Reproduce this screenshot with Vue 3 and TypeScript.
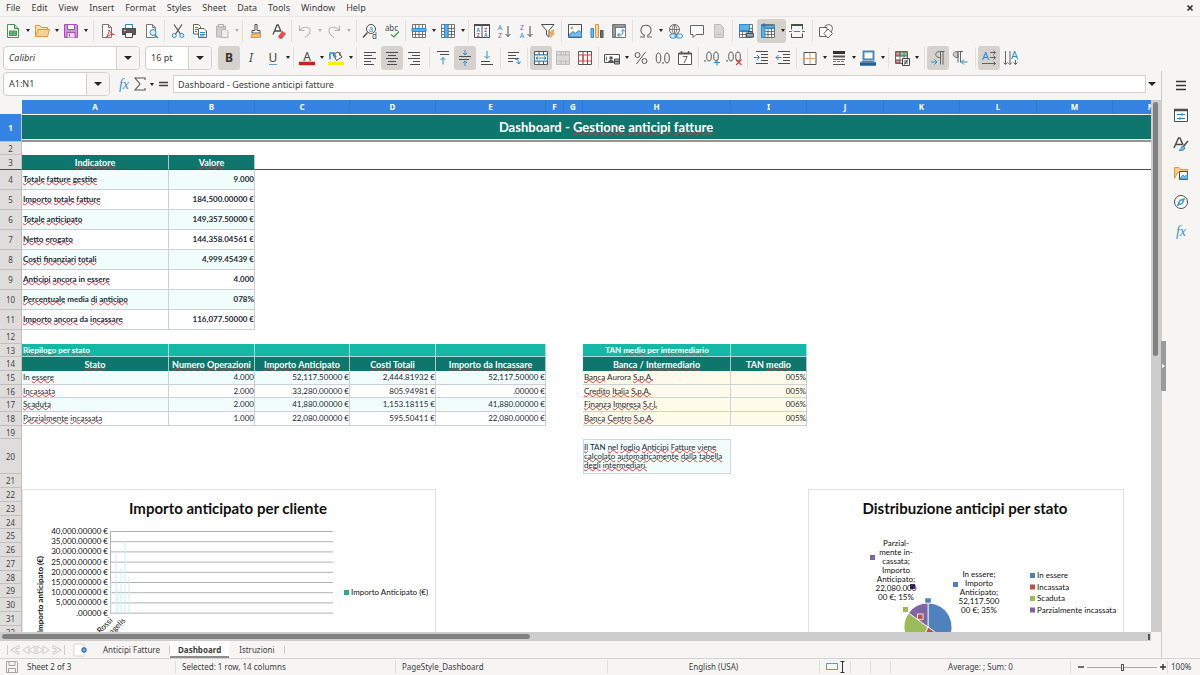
<script setup lang="ts">
import { ref } from 'vue'

interface Tool { id: string; label: string; arrow?: boolean; on?: boolean; off?: boolean }
interface Group { tools: Tool[]; wide?: boolean }
interface Cell { text?: string; kind: string; span?: number }
interface Row { n: number; h: number; cells: Cell[] }

const INK = '#4d4d4d'
const BLUE = '#2a8bd0'
const ORANGE = '#e8983a'
const GREEN = '#3a9b4c'
const RED = '#dc3b3b'
const PURPLE = '#a64fb5'
const p = (d: string, stroke = INK, width = 1, fill = 'none') =>
  `<path d="${d}" fill="${fill}" stroke="${stroke}" stroke-width="${width}"/>`
const t = (x: number, y: number, s: string, fill = INK, size = 8, extra = '') =>
  `<text x="${x}" y="${y}" font-size="${size}" fill="${fill}" text-anchor="middle" font-family="Noto Sans, sans-serif" ${extra}>${s}</text>`
const sheetPage = p('M3.5 1.5h6l3 3v10h-9z M9.5 1.5v3h3', '#777', 1, '#fff')
const grid = p('M1.5 1.5h13v13h-13z M1.5 5.5h13 M1.5 8.5h13 M1.5 11.5h13 M4.5 1.5v13 M8 1.5v13 M11.5 1.5v13', '#666', 0.9, '#fff')
const lines = (rows: [number, number, number][]) => p(rows.map(([x1, x2, y]) => `M${x1} ${y}.5H${x2}`).join(' '))

const icons: Record<string, string> = {
  new: p('M2.5 1.5h7l4 4v9h-11z', GREEN, 1, '#fff') + p('M9.5 1.5v4h4', GREEN, 1, '#a8d8ae') + p('M4.5 8h7v4.500h-7z M4.5 10.2h7 M8 8v4.500', GREEN, 1, '#7fc48b'),
  open: p('M1.500 13.500v-11h4.500l1.500 2h6v3', ORANGE, 1, '#fde2b4') + p('M1.500 13.500l2.500-7h11.500l-2 7z', ORANGE, 1, '#fbcf8d'),
  save: p('M1.500 1.500h12l1 1v12h-13z', PURPLE, 1, '#cf94d8') + p('M4.500 1.500h7v5h-7z', PURPLE, 1, '#fff') + p('M4 14.500v-5h8v5', PURPLE, 1, '#f1dff4') + p('M6.500 10.500v3', PURPLE),
  pdf: sheetPage + p('M7 15c2-3 3.500-6 3-8c3 5 5 5 5.500 4.500c-3-1-6 1-8.500 3.500', RED),
  print: p('M4.500 5.500v-4h7v4', BLUE, 1, '#fff') + p('M1.500 5.500h13v6h-13z', INK, 1, '#5b5b5b') + p('M4.500 9.500h7v5h-7z', INK, 1, '#fff') + p('M3 7.500h1.500', '#fff'),
  preview: sheetPage + `<circle cx="10" cy="9.500" r="3" fill="#d8ecfa" stroke="${BLUE}"/>` + p('M12 12l3 3', BLUE, 1.5),
  cut: p('M4 1.500l6.500 9.500 M12 1.500l-6.500 9.500', INK, 1.2) + `<circle cx="4.200" cy="12.500" r="2" fill="none" stroke="${BLUE}"/><circle cx="11.800" cy="12.500" r="2" fill="none" stroke="${BLUE}"/>`,
  copy: p('M1.500 1.500h5l2 2v7.500h-7z', '#666', 1, '#fff') + p('M6.500 5.500h5.500l2.500 2.500v6.500h-8z', '#666', 1, '#fff') + p('M3 4.500h3 M3 6.500h3 M3 8.500h2 M8 9.500h5 M8 11.500h5 M8 13h4', BLUE),
  paste: p('M2.500 3h9v11h-9z', '#b6b4b2', 1, '#d2d0ce') + p('M4.500 1.500h5v2.500h-5z', '#aaa', 1, '#eee') + p('M7.500 6.500h4.500l2 2v6h-6.500z', '#b6b4b2', 1, '#ededed'),
  clone: p('M7 1.500h2v6h3v2.500h-8v-2.500h3z', INK, 1, '#fff') + p('M4 10.500h8.500v4h-9.500z', ORANGE, 1, '#f5b04f') + p('M5.500 14v-2 M8 14v-2 M10.500 14v-2', '#fff', 0.7),
  clear: p('M3 11.500l4-9.500h1.200l3 7 M4.500 8h5.500', INK, 1.3) + p('M8.500 13.500l4-5 3 2.300-3.700 4.500h-2z', RED, 0.8, '#ee4b4b'),
  undo: p('M2.500 2.500v5h5 M2.500 7.500c4-5 11-4 10.500 1c0 3-3 4-5 6', '#b9b7b5', 1.1),
  redo: p('M13.500 2.500v5h-5 M13.500 7.500c-4-5-11-4-10.500 1c0 3 3 4 5 6', '#b9b7b5', 1.1),
  find: `<circle cx="9" cy="6" r="4.500" fill="#fff" stroke="${INK}"/>` + p('M5.500 9.500l-4.500 5', INK, 1.4) + t(9, 8.5, 'a', BLUE, 8) + t(12.5, 15.5, 'd', INK, 8),
  spell: t(7.5, 7.5, 'abc', INK, 8) + p('M7 11.500l3 2.500 5-5.500', GREEN, 1.2),
  row: grid + p('M1 5.500h14v3h-14z', BLUE, 1, '#5eb0e8'),
  col: grid + p('M4.500 1.500h3.500v13h-3.500z', BLUE, 1, '#5eb0e8'),
  sort: p('M0.500 1.500h15v13h-15z M8 1.500v13', INK, 1, '#fff') + p('M0 2h16', INK, 2) + t(4.3, 8.5, 'A', BLUE, 5, 'font-weight="bold"') + t(4.3, 14, 'Z', PURPLE, 5, 'font-weight="bold"') + t(11.7, 8.5, 'Z', PURPLE, 5, 'font-weight="bold"') + t(11.7, 14, 'A', BLUE, 5, 'font-weight="bold"'),
  asc: t(4, 7, 'A', BLUE, 7) + t(4, 15, 'Z', PURPLE, 7) + p('M12 3v10.500 M9.500 11l2.500 2.500 2.500-2.500'),
  desc: t(4, 7, 'Z', PURPLE, 7) + t(4, 15, 'A', BLUE, 7) + p('M12 3v10.500 M9.500 11l2.500 2.500 2.500-2.500'),
  filter: p('M1.500 1.500h12.500l-5 6v6.500l-2.500-2v-4.500z', INK, 1, '#fff') + p('M12.500 7l-3 4h2l-1 3.500 4-4.500h-2l1.500-3z', ORANGE, 0.8, '#f5b04f'),
  image: p('M1.500 1.500h13v13h-13z', INK, 1, '#fff') + p('M2 12l4-3.500 2.500 2 3.500-3 2.500 2.500v4h-12.500z', BLUE, 1, '#78bced') + `<circle cx="5" cy="5" r="1.300" fill="${ORANGE}"/>`,
  chart: p('M2 5.500h2.500v9h-2.500z', BLUE, 1, '#75bbec') + p('M6.500 1.500h3v13h-3z', ORANGE, 1, '#fbd299') + p('M11.500 7.500h2.500v7h-2.500z', INK, 1, '#777'),
  pivot: p('M1.500 1.500h13v13h-13z M1.500 4.500h13 M4.500 1.500v13', '#777', 1, '#fff') + p('M2 2h12v2h-12z M2 2h2v12h-2z', '#777', 0.6, '#aaa') + p('M6.500 12h3c2 0 2.500-1.500 2.500-5.500 M10 8.500l2-2 2 2 M8.500 10l-2 2 2 2', BLUE),
  omega: p('M2 14h4.200v-1.800c-5-3-4-10 1.800-10s6.800 7 1.800 10v1.800h4.200', '#666', 1.1),
  link: `<circle cx="7.500" cy="6.500" r="5" fill="none" stroke="#666"/>` + p('M2.500 6.500h10 M7.500 1.500v10 M7.500 1.500c-3 3-3 7 0 10 M7.500 1.500c3 3 3 7 0 10', '#666', 0.8) + `<rect x="3" y="11" width="6.500" height="4" rx="2" fill="#f6f5f4" stroke="${BLUE}"/><rect x="9" y="11" width="6.500" height="4" rx="2" fill="#f6f5f4" stroke="${BLUE}"/>` + p('M7 13h4.500', BLUE),
  comment: p('M1.500 2.500h13v9h-7.500l-3 3v-3h-2.500z', '#666', 1, '#fff'),
  header: p('M3.500 1.500h6l3 3v10h-9z', '#bbb', 1, '#d8d6d4') + p('M5 11.500h6', '#bbb'),
  area: grid + p('M1.500 1.500h10v6h-10z', BLUE, 1, '#5eb0e8') + p('M8.500 10.500h7v3.500h-7z M10 8.500h4v2h-4z', INK, 1, '#8aa8bd'),
  freeze: grid + p('M1.500 2.500h13v2.500h-9.500v9.500h-3.500z', BLUE, 1, '#5eb0e8') + p('M4 0v5 M1.500 2.500h5', '#1c6fb0', 0.9),
  split: p('M2.500 2.500v4 M13.500 2.500v4 M2.500 10.500v4h11v-4', INK, 1) + p('M2 2h12', INK, 2) + p('M0 8.500h3 M5 8.500h6 M13 8.500h3', BLUE, 1),
  draw: `<circle cx="10.500" cy="5.500" r="4" fill="#fff" stroke="#666"/>` + p('M1.500 4.500h7.500v9h-7.500z', '#666', 1, '#fff') + p('M10 6l4.500 4.500-4.500 4.500-4-4.500z', '#666', 1, '#fff'),
  bold: t(8, 12, 'B', '#333', 12, 'font-weight="bold"'),
  italic: t(8, 12, 'I', '#444', 12, 'font-style="italic"'),
  underline: t(8, 11.5, 'U', '#444', 12) + p('M4 14.500h8', '#5aa3dd', 1),
  fontcolor: t(8, 10.5, 'A', '#444', 12) + p('M0 13.500h16', '#c9211e', 3.5),
  highlight: p('M5 4.500l5-2.500 4 5-5.500 3.500z', INK, 1, '#fff') + p('M2 9.500v-6.500l4 0 2 4.500', BLUE, 1.5) + p('M12 2v4', INK) + p('M0 13.500h16', '#fbf000', 3.5),
  left: lines([[2, 14, 2], [2, 10, 5], [2, 14, 8], [2, 9, 11], [2, 12, 14]]),
  center: lines([[2, 14, 2], [4, 12, 5], [2, 14, 8], [4, 12, 11], [3, 13, 14]]),
  right: lines([[2, 14, 2], [6, 14, 5], [2, 14, 8], [7, 14, 11], [4, 14, 14]]),
  top: lines([[2, 14, 1], [5, 14, 4]]) + p('M8 14.500v-7 M5.500 10l2.500-2.500 2.500 2.500', BLUE),
  middle: lines([[2, 14, 6], [2, 12, 9]]) + p('M8 0v5 M6 3l2 2 2-2 M8 16v-5 M6 13l2-2 2 2', BLUE),
  bottom: lines([[2, 11, 11], [2, 14, 14]]) + p('M8 1v7 M5.500 6l2.500 2.500 2.500-2.500', BLUE),
  wrap: lines([[2, 13, 2], [2, 10, 5], [2, 13, 8], [2, 7, 11]]) + p('M9 9c3 0 4 2 4 4.500 M10.500 12l2.500 2 1.500-2.500', BLUE),
  merge: p('M1.500 1.500h13v13h-13z M1.500 5h13 M1.500 11h13 M6 1.500v3.500 M10.500 1.500v3.500 M6 11v3.500 M10.500 11v3.500', '#555', 1, '#fff') + p('M1.500 5h13v6h-13z', BLUE, 1, '#fff') + p('M3 8h10 M5 6.500l-2 1.500 2 1.500 M11 6.500l2 1.500-2 1.500', BLUE),
  mergecells: p('M1.500 1.500h13v13h-13z M1.500 5h13 M1.500 11h13 M6 1.500v3.500 M10.500 1.500v3.500 M6 11v3.500 M10.500 11v3.500', '#bbb', 1, '#dddbd9'),
  unmerge: p('M1.500 1.500h13v13h-13z M6 1.500v13 M10.500 1.500v13', '#555', 1, '#fff') + p('M1.500 5h13v6h-13z M6 5v6 M10.500 5v6', RED),
  currency: p('M0.500 4.500h15v8h-15z', '#555', 1, '#fff') + p('M2.500 6.500v4', '#555', 0.8) + `<circle cx="7" cy="8" r="1.800" fill="#555"/>` + p('M4.500 12.500c0-3 5-3 5 0', '#555', 1, '#555') + p('M10.500 9h5v5h-5z M10.500 11.500h5', '#444', 0.9, '#aaa'),
  percent: `<circle cx="4.500" cy="5" r="2.500" fill="none" stroke="#555"/><circle cx="11.500" cy="11" r="2.500" fill="none" stroke="#555"/>` + p('M12.500 2l-9 12', '#555'),
  number: `<ellipse cx="3.500" cy="8" rx="2.300" ry="5" fill="none" stroke="#555"/><ellipse cx="12" cy="8" rx="2.300" ry="5" fill="none" stroke="#555"/>` + p('M8 12v1.800', '#555', 1.2),
  date: p('M1.500 3.500h13v11h-13z', '#555', 1, '#fff') + p('M1.500 3.500h13', '#555', 2) + p('M4.500 1v3 M11.500 1v3', '#555', 1.4) + t(8, 13, '7', '#444', 9),
  adddec: `<ellipse cx="5" cy="6.500" rx="2.300" ry="4.500" fill="none" stroke="#555"/><ellipse cx="12" cy="6.500" rx="2.300" ry="4.500" fill="none" stroke="#555"/>` + p('M1 10v1.800', '#555', 1.2) + p('M10 12.500h6 M13 9.500v6', BLUE, 1.1),
  deldec: `<ellipse cx="5" cy="6.500" rx="2.300" ry="4.500" fill="none" stroke="#555"/><ellipse cx="12" cy="6.500" rx="2.300" ry="4.500" fill="none" stroke="#555"/>` + p('M1 10v1.800', '#555', 1.2) + p('M10 9.500l5.500 5.500 M15.500 9.500l-5.500 5.500', RED, 1.1),
  indent: lines([[3, 15, 1], [8, 15, 4], [8, 15, 7], [8, 15, 10], [3, 15, 13]]) + p('M1 7.500h5 M4 5l2.500 2.500-2.500 2.500', BLUE),
  outdent: lines([[3, 15, 1], [8, 15, 4], [8, 15, 7], [8, 15, 10], [3, 15, 13]]) + p('M1 7.500h5.500 M3.500 5l-2.500 2.500 2.500 2.500', BLUE),
  borders: p('M2 2.500h12v12h-12z', '#555', 1, '#fff') + p('M8 3v11 M2.500 8.500h11', '#d9a15d', 1),
  style: p('M2 2.500h12', '#333', 3) + p('M2 6.500h12', '#555', 2) + p('M2 9.500h12', '#666', 1, 'none') + p('M2 11.500h3 M6 11.500h3 M10 11.500h3', '#777') + p('M2 14.500h12', '#555'),
  bordercolor: p('M3.500 1.500h10v8h-10z', '#4d88b8', 2, '#fff') + p('M1.500 11.500h13', BLUE, 1) + p('M0 14h16', '#1f619e', 3.5),
  cond: p('M1.500 1.500h12v12h-12z', '#666', 1, '#fff') + p('M2 2h4v4h-4z M2 10h4v3h-4z', '#555', 0.6, '#f08a80') + p('M6 2h7v4h-7z', '#555', 0.6, '#8ccf92') + p('M1.500 6h12 M1.500 10h12 M6 1.500v12 M10 1.500v12', '#666', 0.8) + p('M8.500 8.500h7v7h-7z', '#444', 1, '#fff') + p('M10 11h4 M10 13h4 M13.500 9.500l-3 5', '#444', 0.9),
  ltr: p('M14.500 1.500h-5c-5 0-5 6 0 6h1 M10.500 1.500v13 M13 1.500v13', '#666', 1) + p('M1 12h6 M4.500 9.500l2.500 2.500-2.500 2.500', BLUE),
  rtl: p('M8.500 1.500h-3.500c-5 0-5 6 0 6h1v-6', '#777', 1, '#c9c7c5') + p('M6 1.500v11 M8.500 1.500v11 M8 1.500h3', '#666') + p('M15.500 12h-6 M12 9.500l-2.500 2.500 2.500 2.500', BLUE),
  horiz: t(4.5, 10, 'A', BLUE, 11) + p('M9 2.500h5.500 M12.500 0.500l2 2-2 2 M9 7.500h5.500 M12.500 5.500l2 2-2 2 M1 13.500h13.500 M12.500 11.500l2 2-2 2', '#555', 0.9),
  vert: t(11.5, 9, 'A', BLUE, 11) + p('M2.500 1v13.500 M0.500 12.500l2 2 2-2 M7 1v13.500 M5 12.500l2 2 2-2 M12.500 10v4.500 M10.500 12.500l2 2 2-2', '#555', 0.9),
  fx: '<text x="8" y="12.500" font-size="14" fill="#3b8fd9" text-anchor="middle" font-style="italic" font-family="Liberation Serif, serif">fx</text>',
  sum: p('M13 4v-2h-10l5 6-5 6h10v-2', '#555', 1.1),
  equals: p('M4 6.500h9 M4 9.500h9', '#444', 1.3),
  burger: p('M3 3.500h10 M3 7.500h10 M3 11.500h10', '#333', 1.3),
  properties: p('M1.500 2.500h13v12h-13z', INK, 1, '#fff') + p('M1 3h14', INK, 2.5) + p('M4 7.500h8 M9 6v3 M4 11.500h8 M7 10v3', BLUE),
  styles: p('M1 12l4.500-10h1.500l3 7 M3 8.500h6', INK, 1.5) + p('M15 5l-5 6', INK, 1.5) + p('M9.500 10l2.500 2c-1 3-4 2.500-6 2.500c2-1 2-3 3.500-4.500', BLUE, 1, '#78bced'),
  gallery: p('M1.500 13.500v-11h4.500l1.500 2h7v3h-10z', ORANGE, 1, '#fbcf8d') + p('M6.500 6.500h8v8h-8z', INK, 1, '#fff') + p('M7 13l3-3 1.500 1.500 3-2v4.500h-7.500z', BLUE, 0.8, '#78bced'),
  navigator: `<circle cx="8" cy="8" r="6.500" fill="#fff" stroke="${INK}"/>` + p('M11.500 4.500l-2 5-5 2 2-5z', BLUE, 1, '#78bced') + `<circle cx="8" cy="8" r="1" fill="#fff"/>`,
}

const toolbarOne: Group[] = [
  { tools: [{ id: 'new', label: 'New', arrow: true }, { id: 'open', label: 'Open', arrow: true }, { id: 'save', label: 'Save', arrow: true }], wide: true },
  { tools: [{ id: 'pdf', label: 'Export as PDF' }, { id: 'print', label: 'Print' }, { id: 'preview', label: 'Print preview' }] },
  { tools: [{ id: 'cut', label: 'Cut' }, { id: 'copy', label: 'Copy' }, { id: 'paste', label: 'Paste', arrow: true, off: true }] },
  { tools: [{ id: 'clone', label: 'Clone formatting' }, { id: 'clear', label: 'Clear formatting' }] },
  { tools: [{ id: 'undo', label: 'Undo', arrow: true, off: true }, { id: 'redo', label: 'Redo', arrow: true, off: true }], wide: true },
  { tools: [{ id: 'find', label: 'Find and replace' }, { id: 'spell', label: 'Spelling' }] },
  { tools: [{ id: 'row', label: 'Row', arrow: true }, { id: 'col', label: 'Column', arrow: true }] },
  { tools: [{ id: 'sort', label: 'Sort' }, { id: 'asc', label: 'Sort ascending' }, { id: 'desc', label: 'Sort descending' }, { id: 'filter', label: 'AutoFilter' }] },
  { tools: [{ id: 'image', label: 'Insert image' }, { id: 'chart', label: 'Insert chart' }, { id: 'pivot', label: 'Pivot table' }] },
  { tools: [{ id: 'omega', label: 'Special character', arrow: true }, { id: 'link', label: 'Hyperlink' }, { id: 'comment', label: 'Comment' }, { id: 'header', label: 'Headers and footers', off: true }] },
  { tools: [{ id: 'area', label: 'Print area' }, { id: 'freeze', label: 'Freeze rows and columns', arrow: true, on: true }, { id: 'split', label: 'Split window' }], wide: true },
  { tools: [{ id: 'draw', label: 'Draw functions' }] },
]
const toolbarTwo: Group[] = [
  { tools: [{ id: 'bold', label: 'Bold', on: true }, { id: 'italic', label: 'Italic' }, { id: 'underline', label: 'Underline', arrow: true }] },
  { tools: [{ id: 'fontcolor', label: 'Font color', arrow: true }, { id: 'highlight', label: 'Background color', arrow: true }] },
  { tools: [{ id: 'left', label: 'Align left' }, { id: 'center', label: 'Align center', on: true }, { id: 'right', label: 'Align right' }], wide: true },
  { tools: [{ id: 'top', label: 'Align top' }, { id: 'middle', label: 'Center vertically', on: true }, { id: 'bottom', label: 'Align bottom' }] },
  { tools: [{ id: 'wrap', label: 'Wrap text' }] },
  { tools: [{ id: 'merge', label: 'Merge and center', on: true }, { id: 'mergecells', label: 'Merge cells', off: true }, { id: 'unmerge', label: 'Unmerge cells' }] },
  { tools: [{ id: 'currency', label: 'Currency', arrow: true }, { id: 'percent', label: 'Percent' }, { id: 'number', label: 'Number' }, { id: 'date', label: 'Date' }] },
  { tools: [{ id: 'adddec', label: 'Add decimal place' }, { id: 'deldec', label: 'Delete decimal place' }] },
  { tools: [{ id: 'indent', label: 'Increase indent' }, { id: 'outdent', label: 'Decrease indent' }] },
  { tools: [{ id: 'borders', label: 'Borders', arrow: true }, { id: 'style', label: 'Border style', arrow: true }, { id: 'bordercolor', label: 'Border color', arrow: true }] },
  { tools: [{ id: 'cond', label: 'Conditional formatting', arrow: true }], wide: true },
  { tools: [{ id: 'ltr', label: 'Left to right', on: true }, { id: 'rtl', label: 'Right to left' }], wide: true },
  { tools: [{ id: 'horiz', label: 'Horizontal text', on: true }, { id: 'vert', label: 'Vertical text' }] },
]
const sidebar: Tool[] = [
  { id: 'burger', label: 'Sidebar settings' }, { id: 'properties', label: 'Properties' }, { id: 'styles', label: 'Styles' },
  { id: 'gallery', label: 'Gallery' }, { id: 'navigator', label: 'Navigator' }, { id: 'fx', label: 'Functions' },
]
const menus = ['File', 'Edit', 'View', 'Insert', 'Format', 'Styles', 'Sheet', 'Data', 'Tools', 'Window', 'Help']

const columns = [['A', 147], ['B', 86], ['C', 95], ['D', 86], ['E', 110], ['F', 18], ['G', 19], ['H', 148], ['I', 76], ['J', 77], ['K', 76], ['L', 77], ['M', 76], ['N', 77]] as [string, number][]

// Square brackets mark the words flagged by the spell checker.
const parts = (s: string) => s.split(/(\[[^\]]*\])/).filter(Boolean).map(x =>
  x.startsWith('[') ? { text: x.slice(1, -1), bad: true } : { text: x, bad: false })

const gap = (span: number): Cell => ({ kind: 'none', span })
const kpi = (n: number, label: string, value: string): Row => {
  const tint = n % 2 === 0 ? ' mint' : ''
  return { n, h: 20, cells: [{ text: label, kind: 'data strong' + tint }, { text: value, kind: 'data strong num' + tint }, gap(12)] }
}
const state = (n: number, h: number, v: string[], bank: string, rate: string): Row => {
  const tint = n % 2 === 1 ? ' mint' : ''
  return {
    n, h, cells: [
      ...v.map((text, i) => ({ text, kind: 'data' + (i ? ' num' : '') + tint })),
      gap(2), { text: bank, kind: 'data cream' }, { text: rate, kind: 'data cream num' }, gap(5),
    ],
  }
}
const blank = (n: number, h: number): Row => ({ n, h, cells: [gap(14)] })

const rows: Row[] = [
  { n: 1, h: 28, cells: [{ text: 'Dashboard - [Gestione] [anticipi] [fatture]', kind: 'title', span: 14 }] },
  blank(2, 13),
  { n: 3, h: 15, cells: [{ text: '[Indicatore]', kind: 'head' }, { text: '[Valore]', kind: 'head' }, gap(12)] },
  kpi(4, '[Totale] [fatture] [gestite]', '9.000'),
  kpi(5, '[Importo] [totale] [fatture]', '184,500.00000 €'),
  kpi(6, '[Totale] [anticipato]', '149,357.50000 €'),
  kpi(7, '[Netto] [erogato]', '144,358.04561 €'),
  kpi(8, '[Costi] [finanziari] [totali]', '4,999.45439 €'),
  kpi(9, '[Anticipi] [ancora] in [essere]', '4.000'),
  kpi(10, '[Percentuale] media [di] [anticipo]', '078%'),
  kpi(11, '[Importo] [ancora] da [incassare]', '116,077.50000 €'),
  blank(12, 14),
  { n: 13, h: 13, cells: [{ text: '[Riepilogo] per [stato]', kind: 'band' }, { kind: 'band' }, { kind: 'band' }, { kind: 'band' }, { kind: 'band' }, gap(2), { text: 'TAN [medio] per [intermediario]', kind: 'band mid' }, { kind: 'band' }, gap(5)] },
  { n: 14, h: 14, cells: [{ text: '[Stato]', kind: 'head' }, { text: '[Numero] [Operazioni]', kind: 'head' }, { text: '[Importo] [Anticipato]', kind: 'head' }, { text: '[Costi] [Totali]', kind: 'head' }, { text: '[Importo] [da] [Incassare]', kind: 'head' }, gap(2), { text: '[Banca] / [Intermediario]', kind: 'head' }, { text: 'TAN [medio]', kind: 'head' }, gap(5)] },
  state(15, 14, ['In [essere]', '4.000', '52,117.50000 €', '2,444.81932 €', '52,117.50000 €'], '[Banca] Aurora [S.p.A.]', '005%'),
  state(16, 13, ['[Incassata]', '2.000', '33,280.00000 €', '805.94981 €', '.00000 €'], '[Credito] [Italia] [S.p.A.]', '005%'),
  state(17, 14, ['[Scaduta]', '2.000', '41,880.00000 €', '1,153.18115 €', '41,880.00000 €'], '[Finanza] [Impresa] [S.r.l.]', '006%'),
  state(18, 14, ['[Parzialmente] [incassata]', '1.000', '22,080.00000 €', '595.50411 €', '22,080.00000 €'], '[Banca] [Centro] [S.p.A.]', '005%'),
  blank(19, 13),
  { n: 20, h: 35, cells: [gap(7), { text: '[Il] TAN [nel] [foglio] [Anticipi] [Fatture] [viene] [calcolato] [automaticamente] [dalla] [tabella] [degli] [intermediari.]', kind: 'note' }, gap(6)] },
  ...[14, 14, 14, 13, 14, 14, 14, 13, 14, 14, 14, 14].map((h, i) => blank(21 + i, h)),
]

const yTicks = ['40,000.00000 €', '35,000.00000 €', '30,000.00000 €', '25,000.00000 €', '20,000.00000 €', '15,000.00000 €', '10,000.00000 €', '5,000.00000 €', '.00000 €']
const bars = [[89, 92], [94, 65], [96, 101], [99, 80], [103, 52], [107, 88]]

const slice = (from: number, to: number) => {
  const pt = (f: number) => `${120 + 24 * Math.sin(f * 2 * Math.PI)} ${138 - 24 * Math.cos(f * 2 * Math.PI)}`
  return `M120 138L${pt(from)}A24 24 0 0 1 ${pt(to)}Z`
}
const slices = [
  { name: 'In essere', color: '#4f81bd', d: slice(0, 0.35) },
  { name: 'Incassata', color: '#c0504d', d: slice(0.35, 0.57) },
  { name: 'Scaduta', color: '#9bbb59', d: slice(0.57, 0.85) },
  { name: 'Parzialmente incassata', color: '#8064a2', d: slice(0.85, 1) },
]
const callouts = [
  { x: 88, y: 57, lines: ['Parzial-', 'mente in-', 'cassata;', 'Importo', 'Anticipato;', '22,080.000', '00 €; 15%'] },
  { x: 171, y: 88, lines: ['In essere;', 'Importo', 'Anticipato;', '52,117.500', '00 €; 35%'] },
]

const formula = ref('Dashboard - Gestione anticipi fatture')
const nameBox = ref('A1:N1')
const zoom = ref(50)
const tabs = ['Anticipi Fatture', 'Dashboard', 'Istruzioni']
const activeTab = ref('Dashboard')
</script>

<template>
  <div class="app">
    <nav class="menubar" aria-label="Menu">
      <button v-for="m in menus" :key="m" type="button">{{ m }}</button>
      <button type="button" class="close" aria-label="Close document">
        <svg width="8" height="8" viewBox="0 0 8 8"><path d="M1.500 1.500l5 5M6.500 1.500l-5 5" stroke="#333" stroke-width="1.700" /></svg>
      </button>
    </nav>

    <div class="toolbar" role="toolbar" aria-label="Standard">
      <div v-for="(g, i) in toolbarOne" :key="i" class="group" :class="{ wide: g.wide }">
        <span v-for="b in g.tools" :key="b.id" class="tool" :class="{ on: b.on, off: b.off }">
          <button type="button" class="icon" :aria-label="b.label"><svg viewBox="0 0 16 16" v-html="icons[b.id]"></svg></button>
          <button v-if="b.arrow" type="button" class="drop" :aria-label="b.label + ' options'"></button>
        </span>
      </div>
    </div>

    <div class="toolbar" role="toolbar" aria-label="Formatting">
      <label class="combo font"><select aria-label="Font name"><option>Calibri</option></select><span class="caret"></span></label>
      <label class="combo size"><select aria-label="Font size"><option>16 pt</option></select><span class="caret"></span></label>
      <div v-for="(g, i) in toolbarTwo" :key="i" class="group" :class="{ wide: g.wide }">
        <span v-for="b in g.tools" :key="b.id" class="tool" :class="{ on: b.on, off: b.off }">
          <button type="button" class="icon" :aria-label="b.label"><svg viewBox="0 0 16 16" v-html="icons[b.id]"></svg></button>
          <button v-if="b.arrow" type="button" class="drop" :aria-label="b.label + ' options'"></button>
        </span>
      </div>
    </div>

    <main class="main">
      <div class="work">
        <div class="formulabar">
          <div class="combo name"><input v-model="nameBox" aria-label="Name box"><button type="button" class="caret" aria-label="Named ranges"></button></div>
          <button type="button" class="small" aria-label="Function wizard"><svg viewBox="0 0 16 16" v-html="icons.fx"></svg></button>
          <button type="button" class="small" aria-label="Select function"><svg viewBox="0 0 16 16" v-html="icons.sum"></svg></button>
          <button type="button" class="drop" aria-label="Select function options"></button>
          <button type="button" class="small" aria-label="Formula"><svg viewBox="0 0 16 16" v-html="icons.equals"></svg></button>
          <input v-model="formula" class="formula" aria-label="Input line">
          <button type="button" class="drop big" aria-label="Expand formula bar"></button>
        </div>

        <div class="viewport">
          <div class="sheet">
            <table>
              <colgroup><col class="rowcol"><col v-for="c in columns" :key="c[0]" :style="{ width: c[1] + 'px' }"></colgroup>
              <thead>
                <tr><th class="corner"></th><th v-for="c in columns" :key="c[0]" scope="col" class="colhead">{{ c[0] }}</th></tr>
              </thead>
              <tbody>
                <tr v-for="r in rows" :key="r.n" :class="{ frozen: r.n === 3, selected: r.n === 1 }" :style="{ height: r.h + 'px' }">
                  <th scope="row" class="rowhead">{{ r.n }}</th>
                  <td v-for="(c, i) in r.cells" :key="i" :colspan="c.span || 1" :class="c.kind">
                    <template v-if="c.text"><span v-for="(w, k) in parts(c.text)" :key="k" :class="{ bad: w.bad }">{{ w.text }}</span></template>
                  </td>
                </tr>
              </tbody>
            </table>

            <svg class="chart bars" width="414" height="200" viewBox="0 0 414 200" role="img" aria-label="Importo anticipato per cliente">
              <rect x="0.500" y="0.500" width="413" height="220" fill="#fff" stroke="#e2e2e2" />
              <text class="ctitle" x="206" y="25">Importo anticipato per cliente</text>
              <g v-for="(y, i) in yTicks" :key="y">
                <line x1="88" x2="311" :y1="42.500 + i * 10.2" :y2="42.500 + i * 10.2" stroke="#b3b3b3" />
                <text class="tick" x="86" :y="45 + i * 10.2">{{ y }}</text>
              </g>
              <line x1="88.500" x2="88.500" y1="42" y2="124" stroke="#b3b3b3" />
              <line v-for="b in bars" :key="b[0]" :x1="b[0]" :x2="b[0]" :y1="b[1]" y2="124" stroke="#cdf2ec" />
              <text class="axis" transform="translate(21 67) rotate(-90)">Importo anticipato (€)</text>
              <text class="tick" transform="translate(91 132) rotate(-45)">Rossi</text>
              <text class="tick" transform="translate(104 132) rotate(-45)">De Angelis</text>
              <rect x="322" y="101" width="5" height="5" fill="#2aa99b" />
              <text class="label" x="329" y="106">Importo Anticipato (€)</text>
            </svg>

            <svg class="chart pie" width="317" height="200" viewBox="0 0 317 200" role="img" aria-label="Distribuzione anticipi per stato">
              <rect x="0.500" y="0.500" width="315" height="220" fill="#fff" stroke="#e2e2e2" />
              <text class="ctitle" x="157" y="25">Distribuzione anticipi per stato</text>
              <path v-for="s in slices" :key="s.name" :d="s.d" :fill="s.color" stroke="#fff" stroke-width="0.800" />
              <rect x="62" y="66" width="5" height="5" fill="#8064a2" />
              <rect x="145" y="93" width="5" height="5" fill="#4f81bd" />
              <rect x="102" y="95" width="5" height="5" fill="#3f2f73" />
              <rect x="95" y="118" width="5" height="5" fill="#9bbb59" />
              <rect x="117" y="109" width="6" height="5" fill="#4f81bd" stroke="#fff" stroke-width="0.500" />
              <rect x="109.500" y="125" width="5.500" height="5.500" fill="#c0504d" stroke="#fff" stroke-width="0.800" />
              <text v-for="c in callouts" :key="c.x" class="call" :x="c.x" :y="c.y"><tspan v-for="(l, i) in c.lines" :key="l" :x="c.x" :y="c.y + i * 9">{{ l }}</tspan></text>
              <g v-for="(s, i) in slices" :key="s.name">
                <rect x="222" :y="84 + i * 11.500" width="5" height="5" :fill="s.color" />
                <text class="label" x="229" :y="89 + i * 11.500">{{ s.name }}</text>
              </g>
            </svg>
          </div>
          <div class="vscroll"><div class="vthumb"></div></div>
        </div>
        <div class="hscroll"><div class="htrack"><div class="hthumb"></div><div class="hend"></div></div></div>

        <div class="tabbar">
          <div class="nav">
            <button type="button" aria-label="First sheet"><svg viewBox="0 0 15 12"><path d="M1.500 1v10M13 1.500L4.500 6l8.500 4.500v-3h-3v-3h3z" /></svg></button>
            <button type="button" aria-label="Previous sheet"><svg viewBox="0 0 15 12"><path d="M8 2L2 6l6 4zM14 2L8 6l6 4z" /></svg></button>
            <button type="button" aria-label="Next sheet"><svg viewBox="0 0 15 12"><path d="M1 2l6 4-6 4zM7 2l6 4-6 4z" /></svg></button>
            <button type="button" aria-label="Last sheet"><svg viewBox="0 0 15 12"><path d="M13.500 1v10M2 1.500L10.500 6 2 10.500v-3h3v-3H2z" /></svg></button>
          </div>
          <button type="button" class="add" aria-label="Add sheet"><svg viewBox="0 0 14 14"><path d="M1 1h10v12H1z" fill="#fff" stroke="#d5d3d1" /><circle cx="11" cy="7" r="2" fill="#fff" stroke="#3a70b8" stroke-width="1.300" /><path d="M11 4.500v5M8.500 7h5" stroke="#3a70b8" stroke-width="0.700" /></svg></button>
          <button v-for="s in tabs" :key="s" type="button" class="tab" :class="{ active: s === activeTab }" @click="activeTab = s">{{ s }}</button>
        </div>
      </div>

      <aside class="sidebar">
        <div class="handle"></div>
        <button v-for="b in sidebar" :key="b.id" type="button" :aria-label="b.label"><svg viewBox="0 0 16 16" v-html="icons[b.id]"></svg></button>
      </aside>
    </main>

    <footer class="status">
      <div class="first"><svg width="12" height="12" viewBox="0 0 12 12" fill="none" stroke="#a5a3a1"><path d="M.5.5h10l1 1v10H.5zM3 .5h6v4H3zM2.500 11.500v-4h7v4" /></svg>Sheet 2 of 3</div>
      <div>Selected: 1 row, 14 columns</div>
      <div>PageStyle_Dashboard</div>
      <div class="mid">English (USA)</div>
      <div class="mode"><svg width="20" height="12" viewBox="0 0 20 12" fill="none"><path d="M.5 2.500h11v6H.5z" stroke="#4da0dc" fill="#fff" /><path d="M14.500.5h4M14.500 11.500h4M16.500.5v11" stroke="#333" /></svg></div>
      <div></div>
      <div></div>
      <div class="mid">Average: ; Sum: 0</div>
      <div class="zoomer">
        <button type="button" aria-label="Zoom out"><svg viewBox="0 0 8 8"><path d="M1 4h6" /></svg></button>
        <input v-model="zoom" type="range" min="0" max="100" aria-label="Zoom">
        <button type="button" aria-label="Zoom in"><svg viewBox="0 0 8 8"><path d="M1 4h6M4 1v6" /></svg></button>
      </div>
      <div class="pct">100%</div>
    </footer>
  </div>
</template>

<style>
html, body { margin: 0; height: 100%; overflow: hidden; }
</style>

<style scoped>
.app { height: 100vh; display: flex; flex-direction: column; background: #f6f5f4; color: #3c3c3c; font: 9px/12px "Noto Sans", sans-serif; overflow: hidden; }
* { box-sizing: border-box; }
button { border: 0; background: none; padding: 0; margin: 0; font: inherit; color: inherit; display: block; }
svg { display: block; }
input, select { font: inherit; color: inherit; margin: 0; border: 0; outline: 0; background: none; min-width: 0; border-radius: 0; }

.menubar { height: 17px; flex: none; display: flex; align-items: center; gap: 11px; padding: 0 6px; border-bottom: 1px solid #e9e8e7; }
.close { margin-left: auto; }

.toolbar { height: 27px; flex: none; display: flex; align-items: center; padding-left: 2px; }
.group { display: flex; padding-right: 5px; position: relative; }
.group.wide { padding-right: 7px; }
.group::after { content: ""; position: absolute; right: 2px; top: 1px; bottom: 1px; width: 1px; background: #e3e1df; }
.group:last-child::after { display: none; }
.tool { display: flex; align-items: center; border-radius: 3px; }
.tool.on { background: #d5d1cd; }
.icon { width: 22px; height: 24px; }
.icon svg, .small svg { width: 16px; height: 16px; margin: 0 auto; overflow: visible; }
.drop { width: 7px; height: 22px; display: grid; place-items: center; flex: none; }
.drop::after, .caret::after { content: ""; border: 2px solid transparent; border-top: 3px solid #222; border-bottom: 0; }
.drop.big::after, .caret::after { border-width: 4px; border-top-width: 4px; border-bottom: 0; }
.off .drop::after { border-top-color: #b5b3b1; }

.combo { display: flex; height: 24px; flex: none; border: 1px solid #d2cfcc; border-radius: 4px; background: #fff; overflow: hidden; }
.combo select, .combo input { flex: 1; appearance: none; padding: 0 5px; }
.caret { width: 23px; flex: none; display: grid; place-items: center; background: #f6f5f4; border-left: 1px solid #d2cfcc; }
.font { width: 137px; margin-left: 1px; }
.font select { font-style: italic; }
.size { width: 67px; margin: 0 6px 0 5px; }
.name { width: 107px; margin-right: 6px; }

.main { flex: 1; display: flex; min-height: 0; }
.work { flex: 1; min-width: 0; display: flex; flex-direction: column; }
.formulabar { height: 29px; flex: none; display: flex; align-items: center; padding: 0 4px 3px 3px; }
.small { width: 16px; }
.formula { flex: 1; height: 18px; margin-left: 2px; border: 1px solid #d5d3d1; background: #fff; padding: 0 4px; }
.drop.big { width: 11px; }

.viewport { flex: 1; min-height: 0; display: flex; }
.sheet { flex: 1; min-width: 0; position: relative; overflow: hidden; background: #fff; }
.vscroll { width: 10px; flex: none; background: #cdcdcd; padding: 2px 0 0 2px; }
.vthumb { width: 5px; height: 48%; border-radius: 3px; background: #818181; }
.hscroll { height: 9px; flex: none; padding-right: 10px; }
.htrack { height: 9px; background: #cdcdcd; display: flex; justify-content: space-between; align-items: center; padding: 0 1px 0 2px; }
.hthumb { width: 46%; height: 5px; border-radius: 3px; background: #818181; }
.hend { width: 2px; height: 6px; background: #555; }

table { border-collapse: separate; border-spacing: 0; table-layout: fixed; width: 0; min-width: 100%; font: 8px/9px Lato, sans-serif; color: #1f2a37; }
.rowcol { width: 22px; }
th, td { padding: 0; white-space: nowrap; overflow: hidden; vertical-align: middle; }
.corner { background: #f6f5f4; }
.colhead { height: 14px; background: #3584e4; color: #fff; font: bold 8px/12px "Noto Sans", sans-serif; border-right: 1px solid #2f78d0; }
.rowhead { background: #dfdddb; border-right: 1px solid #c2c0be; border-bottom: 1px solid #c2c0be; color: #444; font: 8px/9px "Noto Sans", sans-serif; }
.selected .rowhead { background: #3584e4; color: #fff; font-weight: bold; }
.frozen > * { border-bottom: 1px solid #4a4a4a; }
.title { background: #0f766e; color: #fff; font-size: 13px; line-height: 16px; font-weight: bold; text-align: center; border-top: 1px solid #fff; border-bottom: 2px solid #989492; box-shadow: inset 0 -1px #fff; padding-bottom: 2px; }
.head { background: #0f766e; color: #fff; font-weight: bold; font-size: 9px; text-align: center; border-right: 1px solid #a9c9c6; }
.band { background: #14b8a6; color: #fff; font-weight: bold; padding-left: 1px; border-right: 1px solid #a5ddd7; border-bottom: 1px solid #a5ddd7; }
.band.mid { text-align: center; }
.data { border-right: 1px solid #cdd1d8; border-bottom: 1px solid #cdd1d8; padding: 0 0 0 1px; }
.strong { font-weight: bold; }
.num { text-align: right; }
.mint { background: #f0fdfa; }
.cream { background: #fffbeb; }
.note { background: #f0fdfa; border: 1px solid #cfd6dc; white-space: normal; }
.bad { text-decoration: underline wavy #dc3b3b 1px; text-underline-offset: -1px; text-decoration-skip-ink: none; }

.chart { position: absolute; top: 389px; font: 8px Lato, sans-serif; fill: #111; }
.chart.bars { left: 22px; }
.chart.pie { left: 808px; }
.ctitle { font-size: 15px; font-weight: bold; text-anchor: middle; }
.tick { text-anchor: end; }
.axis { font-weight: bold; text-anchor: end; }
.call { text-anchor: middle; }

.tabbar { height: 17px; flex: none; display: flex; align-items: stretch; font-size: 8px; }
.nav { display: flex; align-items: center; padding-left: 6px; }
.nav svg { width: 15px; height: 12px; fill: none; stroke: #cfcdcb; }
.add { width: 18px; margin: 0 2px 0 7px; }
.add svg { width: 14px; height: 14px; }
.tab { padding: 0 10px; position: relative; }
.tab::after { content: ""; position: absolute; right: 0; top: 5px; bottom: 4px; width: 1px; background: #c9c7c5; }
.tab.active { background: #fff; font-weight: bold; border-bottom: 2px solid #8f8d8b; padding: 2px 8px 0; }
.tab.active::after { display: none; }

.sidebar { width: 39px; flex: none; border-left: 1px solid #cfcdcb; position: relative; }
.sidebar button { width: 100%; height: 29px; }
.sidebar svg { width: 16px; height: 16px; margin: 0 auto; }
.handle { position: absolute; left: -1px; top: 46%; width: 5px; height: 50px; background: #9a9a9a; display: grid; place-items: center; }
.handle::after { content: ""; border: 2px solid transparent; border-left: 3px solid #fff; border-right: 0; }

.status { height: 17px; flex: none; display: grid; grid-template-columns: 176fr 220fr 212fr 212fr 31fr 20fr 20fr 180fr 97fr 32fr; align-items: center; border-top: 1px solid #d5d3d1; font-size: 8px; }
.status > div { height: 12px; display: flex; align-items: center; padding-left: 6px; border-right: 1px solid #e0dedc; white-space: nowrap; min-width: 0; }
.status > .first { gap: 9px; }
.status > .mid { justify-content: center; padding: 0; }
.status > .zoomer { gap: 2px; }
.status > .pct { padding-left: 3px; border: 0; }
.zoomer button svg { width: 8px; height: 8px; stroke: #333; stroke-width: 1.400; }
.zoomer input { appearance: none; flex: 1; height: 12px; background: linear-gradient(#aaa, #aaa) center / 100% 1px no-repeat; }
.zoomer input::-webkit-slider-thumb { appearance: none; width: 3px; height: 7px; border: 1px solid #555; background: #eee; }
</style>
